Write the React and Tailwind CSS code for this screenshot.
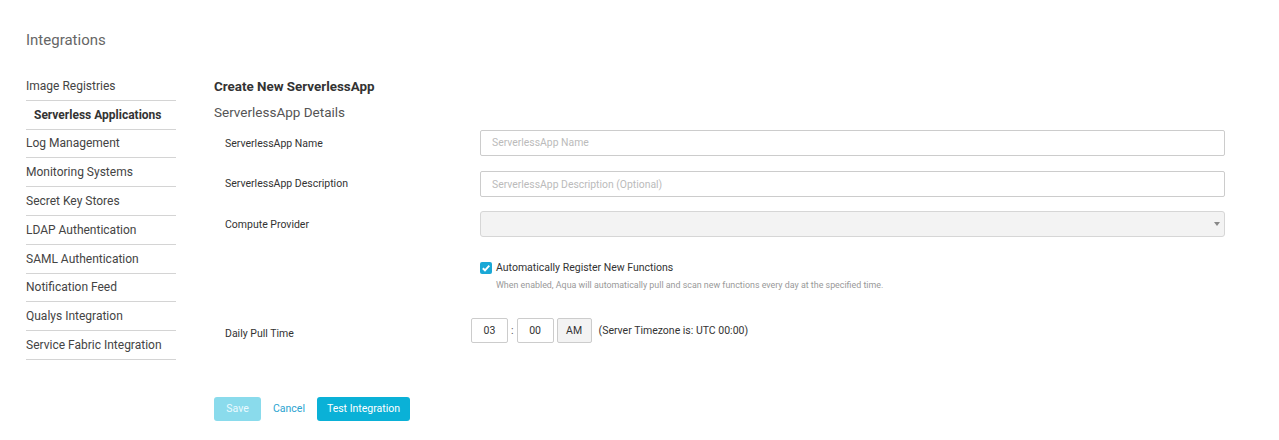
import React from "react";

const items = [
  "Image Registries",
  "Serverless Applications",
  "Log Management",
  "Monitoring Systems",
  "Secret Key Stores",
  "LDAP Authentication",
  "SAML Authentication",
  "Notification Feed",
  "Qualys Integration",
  "Service Fabric Integration",
];

function Row({ label, children, className = "", labelClass = "pt-[1px]" }) {
  return (
    <div className={"flex items-center " + className}>
      <div className={"w-[266px] pl-[11px] text-[10.5px] text-[#333] " + labelClass}>{label}</div>
      <div className="flex-1">{children}</div>
    </div>
  );
}

export default function App() {
  return (
    <div className="font-['Roboto',sans-serif] bg-white min-h-[440px] pl-[26px] pt-[31px] text-[#333]">
      <h1 className="text-[15px] leading-[18px] text-[#666]">Integrations</h1>
      <div className="flex mt-[23px]">
        <ul className="w-[150px] shrink-0">
          {items.map((it, i) => (
            <li
              key={it}
              className={
                "h-[28.8px] border-b border-[#d4d4d4] flex items-center text-[12px] " +
                (i === 1 ? "pl-[8px] font-bold text-[#333]" : "text-[#444]")
              }
            >
              {it}
            </li>
          ))}
        </ul>
        <div className="ml-[38px] w-[1011px]">
          <h2 className="mt-[6px] text-[13.4px] leading-[17px] font-bold text-[#333]">Create New ServerlessApp</h2>
          <h3 className="mt-[8px] text-[13.5px] leading-[18px] text-[#555]">ServerlessApp Details</h3>
          <Row label="ServerlessApp Name" className="mt-[8px]" labelClass="pt-[3px]">
            <input
              className="w-full h-[26px] border border-[#ccc] rounded-[2px] px-[11px] text-[10.4px] placeholder:text-[#bbb] outline-none"
              placeholder="ServerlessApp Name"
            />
          </Row>
          <Row label="ServerlessApp Description" className="mt-[15px]">
            <input
              className="w-full h-[26px] border border-[#ccc] rounded-[2px] px-[11px] text-[10.4px] placeholder:text-[#bbb] outline-none"
              placeholder="ServerlessApp Description (Optional)"
            />
          </Row>
          <Row label="Compute Provider" className="mt-[14px]" labelClass="pt-[2px]">
            <div className="relative w-full h-[26px] border border-[#d6d6d6] rounded-[3px] bg-[#f3f3f3]">
              <div className="absolute right-[4px] top-[10px] w-0 h-0 border-l-[3px] border-r-[3px] border-t-[4px] border-l-transparent border-r-transparent border-t-[#888]" />
            </div>
          </Row>
          <div className="mt-[24px] ml-[266px] flex items-center">
            <span className="w-[12px] h-[12px] rounded-[2px] bg-[#1aa8d6] flex items-center justify-center">
              <svg width="10" height="10" viewBox="0 0 10 10">
                <path d="M1.8 5.2 L4 7.3 L8.3 2.6" stroke="#fff" strokeWidth="1.9" fill="none" />
              </svg>
            </span>
            <span className="ml-[4px] text-[10.5px] leading-[14px] text-[#333]">Automatically Register New Functions</span>
          </div>
          <div className="ml-[282px] mt-[5px] text-[8.9px] leading-[11px] text-[#999]">
            When enabled, Aqua will automatically pull and scan new functions every day at the specified time.
          </div>
          <div className="flex items-center mt-[27px]">
            <div className="w-[257px] pl-[11px] pt-[7px] text-[10.5px] text-[#333]">Daily Pull Time</div>
            <div className="w-[37px] h-[25px] border border-[#ccc] rounded-[2px] flex items-center justify-center text-[10.5px]">03</div>
            <span className="mx-[3px] text-[10.5px] text-[#555]">:</span>
            <div className="w-[37px] h-[25px] border border-[#ccc] rounded-[2px] flex items-center justify-center text-[10.5px]">00</div>
            <div className="ml-[3px] w-[35px] h-[25px] border border-[#ccc] rounded-[2px] bg-[#f3f3f3] flex items-center justify-center text-[10.5px]">AM</div>
            <span className="ml-[7px] text-[10.5px] text-[#333]">(Server Timezone is: UTC 00:00)</span>
          </div>
          <div className="flex items-center mt-[54px]">
            <button className="w-[47px] h-[24px] rounded-[3px] bg-[#8adbec] text-[#eafaff] text-[10.5px]">Save</button>
            <button className="ml-[12px] text-[10.5px] text-[#2aa3d0]">Cancel</button>
            <button className="ml-[12px] w-[93px] h-[24px] rounded-[3px] bg-[#0ab1d7] text-white text-[10.5px]">Test Integration</button>
          </div>
        </div>
      </div>
    </div>
  );
}
